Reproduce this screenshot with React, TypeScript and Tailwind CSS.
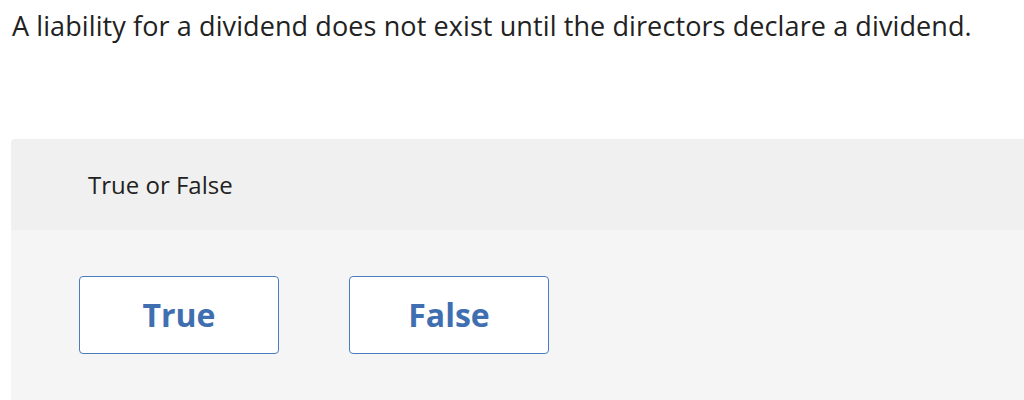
import React from 'react';

export default function App() {
  return (
    <div className="w-[1024px] h-[400px] overflow-hidden bg-white font-['Open_Sans','Liberation_Sans',sans-serif]">
      <div className="pl-[12px] pt-[10px] h-[139px]">
        <p className="text-[27px] leading-[32px] text-[#222] whitespace-nowrap tracking-[0.1px]">
          A liability for a dividend does not exist until the directors declare a dividend.
        </p>
      </div>

      <div className="ml-[11px] w-[1030px] rounded-tl-[4px] overflow-hidden">
        <div className="h-[91px] bg-[#f0f0f0] flex items-center pl-[77px]">
          <span className="text-[24px] text-[#222]">True or False</span>
        </div>
        <div className="h-[170px] bg-[#f5f5f5] pl-[68px] pt-[46px] flex gap-[70px] items-start">
          {['True', 'False'].map((label) => (
            <button
              key={label}
              className="w-[200px] h-[78px] bg-white border-[1.5px] border-[#4a7cc0] rounded-[4px] text-[#3f6fb0] text-[32px] font-bold flex items-center justify-center"
            >
              {label}
            </button>
          ))}
        </div>
      </div>
    </div>
  );
}
